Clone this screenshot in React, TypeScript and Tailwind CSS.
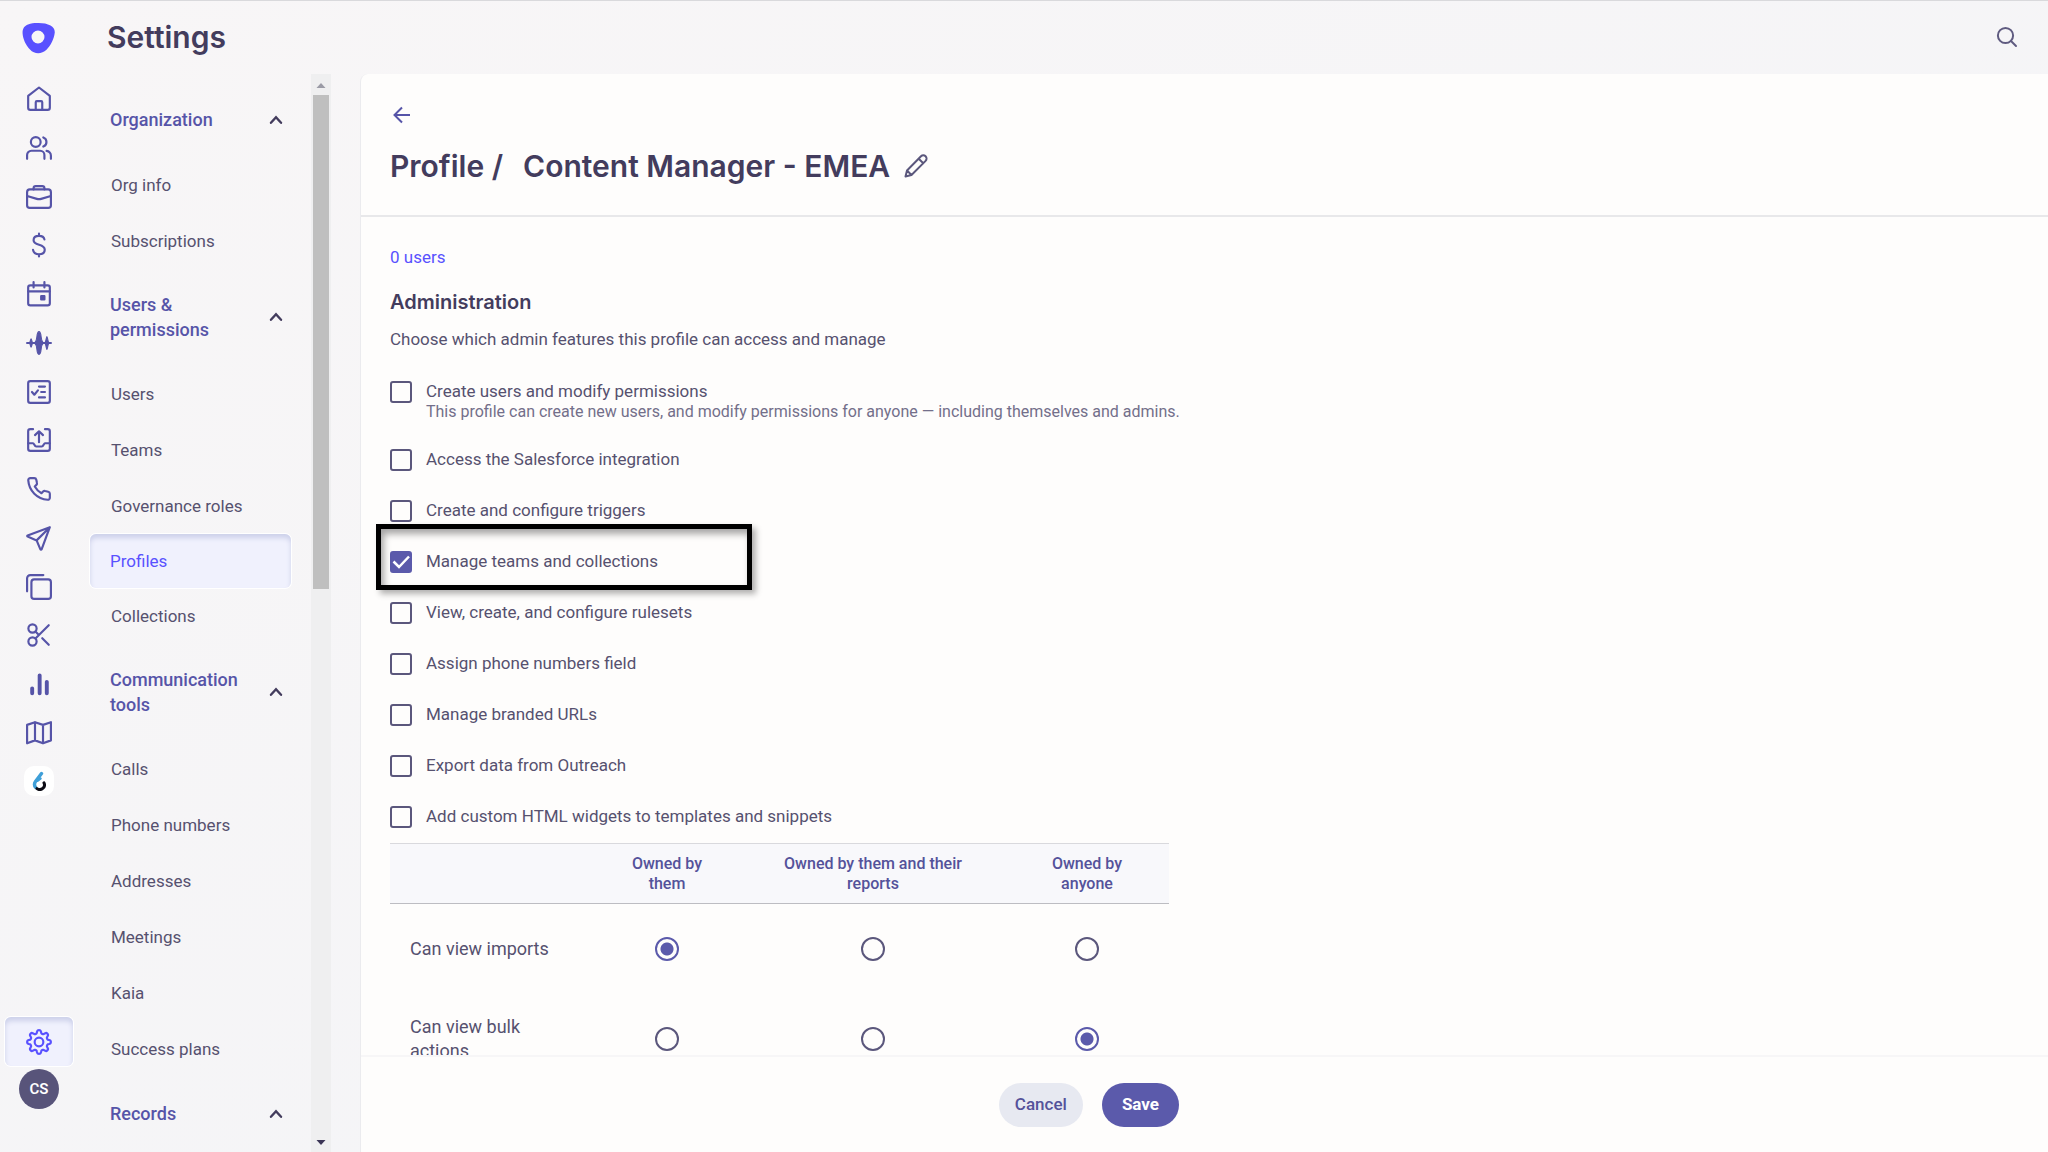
import type { ReactNode } from "react";

type NavIcon = { name: string; art: ReactNode };

const navIcons: NavIcon[] = [
  {
    name: "Home",
    art: (
      <>
        <path d="M2 9.2 12 1.4 22 9.2V20a2 2 0 0 1-2 2H4a2 2 0 0 1-2-2z" />
        <path d="M9 22v-7a1 1 0 0 1 1-1h4a1 1 0 0 1 1 1v7" />
      </>
    ),
  },
  {
    name: "Prospects",
    art: (
      <>
        <circle cx="9" cy="6.500" r="4.500" />
        <path d="M1 22v-3.500a4 4 0 0 1 4-4h8a4 4 0 0 1 4 4V22" />
        <path d="M16 2.300a4.500 4.500 0 0 1 0 8.400M19 14.700a4.500 4.500 0 0 1 4 4.500V22" />
      </>
    ),
  },
  {
    name: "Accounts",
    art: (
      <>
        <rect x="1" y="5" width="22" height="17" rx="2.500" />
        <path d="M7 5V4a2 2 0 0 1 2-2h6a2 2 0 0 1 2 2v1M1 11l9 2.700a7 7 0 0 0 4 0L23 11" />
      </>
    ),
  },
  {
    name: "Opportunities",
    art: (
      <path d="M17 6.800C16.600 4.700 14.800 3.500 12 3.500c-3 0-5 1.500-5 4 0 5.500 10.300 3 10.300 8.800 0 2.600-2.200 4.200-5.300 4.200-3 0-5.100-1.400-5.500-4M12 1.500v2M12 20.500v2" />
    ),
  },
  {
    name: "Calendar",
    art: (
      <>
        <rect x="2" y="4" width="20" height="18.500" rx="2" />
        <path d="M2 9.500h20M7 1v5M17 1v5" />
        <path d="M14 14h3v3h-3z" fill="currentColor" />
      </>
    ),
  },
  {
    name: "Kaia",
    art: (
      <>
        <path d="M1 12h22" />
        <path
          d="M12 1.500c1 0 1.700 2 2 5 .3 3.300.9 4.500 1.900 5.500-1 1-1.600 2.200-1.900 5.500-.3 3-1 5-2 5s-1.700-2-2-5c-.3-3.300-.9-4.500-1.900-5.500 1-1 1.600-2.200 1.900-5.500.3-3 1-5 2-5zM4.700 8.200c.5 0 .6 2.300 1.500 3.800-.9 1.500-1 3.800-1.500 3.800S4.100 13.500 3.200 12c.9-1.500 1-3.800 1.500-3.800zM19.300 6c.5 0 .7 4 1.800 6-1.100 2-1.300 6-1.800 6s-.7-4-1.800-6c1.100-2 1.300-6 1.800-6z"
          fill="currentColor"
          strokeWidth="1"
        />
      </>
    ),
  },
  {
    name: "Tasks",
    art: (
      <>
        <rect x="2" y="2" width="20" height="20" rx="2" />
        <path d="m5.500 12 2.200 2.500L11 10.500M12 7h5.500M14 12h3.500M12 17h5.500" />
      </>
    ),
  },
  {
    name: "Outbox",
    art: (
      <>
        <path d="M6.500 2H4a2 2 0 0 0-2 2v16a2 2 0 0 0 2 2h16a2 2 0 0 0 2-2V4a2 2 0 0 0-2-2h-2.500" />
        <path d="M12 14V4M8.300 7.500 12 4l3.700 3.500M2 15h4.500c1 0 1.300 3 3 3h5c1.700 0 2-3 3-3H22" />
      </>
    ),
  },
  {
    name: "Calls",
    art: (
      <path d="M7.600 2H4C2.900 2 2 2.900 2.100 4c.7 9.700 8.200 17.200 17.900 17.900 1.100.1 2-.8 2-1.900v-3.600c0-.9-.6-1.700-1.500-1.900l-2.800-.6c-.7-.2-1.400 0-1.900.5l-1.500 1.500A16 16 0 0 1 8.100 9.700l1.500-1.500c.5-.5.7-1.200.5-1.900l-.6-2.800C9.300 2.600 8.500 2 7.600 2z" />
    ),
  },
  {
    name: "Sequences",
    art: (
      <path d="M22 2 1.500 9.600c-.5.200-.5.900 0 1.100l8.300 3.500 3.500 8.300c.2.500.9.500 1.100 0zM22 2 9.800 14.200" />
    ),
  },
  {
    name: "Templates",
    art: (
      <>
        <rect x="5" y="5" width="18" height="18" rx="2.500" />
        <path d="M1 16V4a3 3 0 0 1 3-3h12" />
      </>
    ),
  },
  {
    name: "Snippets",
    art: (
      <>
        <circle cx="6" cy="6" r="3.800" />
        <circle cx="6" cy="18" r="3.800" />
        <path d="M21 3 8.700 15.300M8.700 8.700l3 3M15 15l6 6" />
      </>
    ),
  },
  {
    name: "Reports",
    art: <path d="M5.700 16v4.500M12.600 4v16.500M19.200 10v10.500" strokeWidth="3.600" />,
  },
  {
    name: "Success plans",
    art: (
      <path d="M1 4.500v17l7.300-2.700 7.400 2.700 7.300-2.700V2l-7.300 2.500L8.300 2zM8.300 2v16.800M15.700 4.500v17" />
    ),
  },
];

// Eight rounded teeth around the 24px box
const gearPoints = Array.from({ length: 96 }, (_, i) => {
  const angle = (i / 96) * Math.PI * 2;
  const radius = 9.5 + 1.5 * Math.tanh(1.8 * Math.cos(8 * angle));
  return `${12 + radius * Math.cos(angle)},${12 + radius * Math.sin(angle)}`;
}).join(" ");

type Entry = { label: string; href: string };

const sections: { title: string; items: Entry[] }[] = [
  {
    title: "Organization",
    items: [
      { label: "Org info", href: "#org-info" },
      { label: "Subscriptions", href: "#subscriptions" },
    ],
  },
  {
    title: "Users & permissions",
    items: [
      { label: "Users", href: "#users" },
      { label: "Teams", href: "#teams" },
      { label: "Governance roles", href: "#governance-roles" },
      { label: "Profiles", href: "#profiles" },
      { label: "Collections", href: "#collections" },
    ],
  },
  {
    title: "Communication tools",
    items: [
      { label: "Calls", href: "#calls" },
      { label: "Phone numbers", href: "#phone-numbers" },
      { label: "Addresses", href: "#addresses" },
      { label: "Meetings", href: "#meetings" },
      { label: "Kaia", href: "#kaia" },
      { label: "Success plans", href: "#success-plans" },
    ],
  },
  { title: "Records", items: [] },
];

const permissions = [
  {
    label: "Create users and modify permissions",
    hint: "This profile can create new users, and modify permissions for anyone — including themselves and admins.",
  },
  { label: "Access the Salesforce integration" },
  { label: "Create and configure triggers" },
  { label: "Manage teams and collections", checked: true },
  { label: "View, create, and configure rulesets" },
  { label: "Assign phone numbers field" },
  { label: "Manage branded URLs" },
  { label: "Export data from Outreach" },
  { label: "Add custom HTML widgets to templates and snippets" },
];

const scopes = ["Owned by them", "Owned by them and their reports", "Owned by anyone"];

const access = [
  { label: "Can view imports", name: "imports", selected: 0 },
  { label: "Can view bulk actions", name: "bulk-actions", selected: 2 },
];

function Glyph({ children, className = "size-[26px]" }: { children: ReactNode; className?: string }) {
  return (
    <svg
      viewBox="0 0 24 24"
      className={className}
      fill="none"
      stroke="currentColor"
      strokeWidth="2"
      strokeLinecap="round"
      strokeLinejoin="round"
      aria-hidden="true"
    >
      {children}
    </svg>
  );
}

function Rail() {
  return (
    <nav aria-label="Main" className="w-[78px] shrink-0 flex flex-col items-center pb-[43px] text-[#5654a8]">
      <a href="#home" aria-label="Outreach" className="mt-[21px]">
        <svg viewBox="0 0 34 32" className="w-[34px] h-8" aria-hidden="true">
          <path
            fill="#5951ff"
            fillRule="evenodd"
            d="M15 1c5.500-.2 10 .6 13.500 2.500 3 1.700 4.600 4 4.200 7.500-.7 6-4 12.500-8.200 16.800-5 4.700-12 4.700-16.500-.3C3.500 23 .9 16.500.600 11.500.3 6.500 2.500 3.800 6 2.500 9 1.400 12 1.100 15 1zM16 8.500a6.500 6.500 0 1 0 0 13 6.500 6.500 0 0 0 0-13z"
          />
        </svg>
      </a>

      <ul className="mt-8 h-[660px] shrink-0 flex flex-col justify-between">
        {navIcons.map((icon) => (
          <li key={icon.name}>
            <a href="#nav" aria-label={icon.name} className="block">
              <Glyph>{icon.art}</Glyph>
            </a>
          </li>
        ))}
      </ul>
      <a
        href="#sixsense"
        aria-label="6sense"
        className="mt-5 size-[30px] rounded-[10px] bg-white flex items-center justify-center"
      >
        <svg viewBox="0 0 14 20" className="w-3.5 h-5" fill="none" strokeLinecap="round" aria-hidden="true">
          <path d="M9.500 2.500 3.500 10.500a5 5 0 0 0 .2 6" stroke="#3f9fd8" strokeWidth="3.400" />
          <path d="M5.500 9.800 8.500 7.500" stroke="#3f9fd8" strokeWidth="2.500" />
          <path d="M5 17.600a4.700 4.700 0 0 0 7-5.800" stroke="#0b0b14" strokeWidth="3" />
        </svg>
      </a>

      <button
        type="button"
        aria-label="Settings"
        className="mt-auto w-[68px] h-[49px] rounded-md bg-[#f0f1fd] text-[#5951ff] flex items-center justify-center shadow-[0_0_0_1px_white,inset_0_4px_5px_#cdd1ea]"
      >
        <Glyph>
          <circle cx="12" cy="12" r="4" />
          <polygon points={gearPoints} />
        </Glyph>
      </button>
      <button
        type="button"
        aria-label="Account"
        className="mt-[3px] size-10 shrink-0 rounded-full bg-[#58547a] text-white text-[15px] font-semibold"
      >
        CS
      </button>
    </nav>
  );
}

function Sidebar() {
  return (
    <div className="w-[282px] shrink-0 flex min-h-0">
      <nav aria-label="Settings" className="flex-1 min-w-0 overflow-hidden pl-3 pr-5 pt-[9px] text-[17px]">
        {sections.map((section) => (
          <div key={section.title}>
            <button
              type="button"
              className="w-full min-h-[74px] pt-[23px] pb-6 pl-5 pr-1 flex items-center justify-between text-left text-lg leading-[25px] font-medium text-[#5654a8] cursor-pointer"
            >
              <span className="w-[130px]">{section.title}</span>
              <svg viewBox="0 0 24 24" className="size-[22px] text-[#433c5d]" fill="none" stroke="currentColor" strokeWidth="2.600" aria-hidden="true">
                <path d="m6.500 15 5.500-6 5.500 6" strokeLinecap="round" />
              </svg>
            </button>
            <ul>
              {section.items.map((item) => (
                <li key={item.label}>
                  {item.label === "Profiles" ? (
                    <a
                      href={item.href}
                      aria-current="page"
                      className="h-[54px] pt-0.5 pl-5 flex items-center rounded-md bg-[#f0f1fd] text-[#5951ff] shadow-[0_0_0_1px_white,inset_0_4px_5px_#cdd1ea]"
                    >
                      {item.label}
                    </a>
                  ) : (
                    <a href={item.href} className="h-14 pt-0.5 pl-[21px] flex items-center text-[#56516f]">
                      {item.label}
                    </a>
                  )}
                </li>
              ))}
            </ul>
          </div>
        ))}
      </nav>

      {/* Scrollbar */}
      <div className="w-5 mr-[29px] shrink-0 flex flex-col items-center bg-[#efeff0]">
        <svg viewBox="0 0 20 21" className="w-5 h-[21px]" aria-hidden="true">
          <path d="M5.500 14h9L10 9z" fill="#9b9ba6" />
        </svg>
        <div className="w-4 h-[494px] bg-[#bfbfbf]" />
        <svg viewBox="0 0 20 21" className="mt-auto w-5 h-[21px]" aria-hidden="true">
          <path d="M5.500 9h9L10 14z" fill="#3b3556" />
        </svg>
      </div>
    </div>
  );
}

function Permission({ label, hint, checked }: { label: string; hint?: string; checked?: boolean }) {
  return (
    <li className={hint ? "h-[68px]" : "h-[51px] last:h-[38px]"}>
      <label className="relative flex items-start gap-3.5">
        <span className="relative mt-px size-[22px] shrink-0">
          <input
            type="checkbox"
            defaultChecked={checked}
            className="peer block size-[22px] appearance-none rounded-[3px] border-2 border-[#5b577c] checked:border-[#5b5aab] checked:bg-[#5b5aab]"
          />
          <svg
            viewBox="0 0 22 22"
            className="absolute inset-0 hidden size-[22px] peer-checked:block"
            fill="none"
            stroke="white"
            strokeWidth="2.500"
            aria-hidden="true"
          >
            <path d="m3.500 10.500 5.500 5.500L19 5.500" />
          </svg>
        </span>
        <span className="flex flex-col">
          <span className="text-[17px] leading-[22px] text-[#56516f]">{label}</span>
          {hint && <span className="text-base leading-5 text-[#736f8a]">{hint}</span>}
        </span>
        {checked && (
          <span className="pointer-events-none absolute -left-3.5 -top-[26px] h-[66px] w-[376px] border-[5px] border-black shadow-[4px_4px_6px_rgba(0,0,0,0.3),inset_3px_5px_7px_rgba(0,0,0,0.35)]" />
        )}
      </label>
    </li>
  );
}

function AccessTable() {
  return (
    <table className="w-[779px] table-fixed border-collapse">
      <colgroup>
        <col className="w-[203px]" />
        <col className="w-[148px]" />
        <col className="w-[264px]" />
        <col className="w-[164px]" />
      </colgroup>
      <thead>
        <tr className="h-[60px] border-t border-b border-t-[#d9d9dd] border-b-[#bdbdc2] bg-[#f8f8fb]">
          <td />
          {scopes.map((scope) => (
            <th key={scope} scope="col" className="px-5 text-base leading-5 font-medium text-[#54529a]">
              {scope}
            </th>
          ))}
        </tr>
      </thead>
      <tbody>
        {access.map((row) => (
          <tr key={row.name} className="h-[90px]">
            <th scope="row" className="px-5 text-left text-lg leading-6 font-normal text-[#56516f]">
              {row.label}
            </th>
            {scopes.map((scope, i) => (
              <td key={scope}>
                <input
                  type="radio"
                  name={row.name}
                  aria-label={`${row.label}: ${scope}`}
                  defaultChecked={row.selected === i}
                  className="mx-auto block size-6 appearance-none rounded-full border-2 border-[#5b577c] checked:border-[#5b5aab] checked:bg-[radial-gradient(circle,#5b5aab_6px,transparent_7px)]"
                />
              </td>
            ))}
          </tr>
        ))}
      </tbody>
    </table>
  );
}

export default function App() {
  return (
    <div className="h-screen flex overflow-hidden border-t border-[#d9d9dc] bg-linear-to-br from-[#f8f6f7] to-[#f3f4f7] font-[Roboto,'Liberation_Sans',sans-serif] text-[#56516f]">
      <Rail />

      <div className="flex-1 min-w-0 flex flex-col">
        {/* Header */}
        <header className="h-[73px] shrink-0 flex items-center justify-between pl-[29px] pr-[30px] pb-0.5">
          <h1 className="font-[Inter,sans-serif] text-3xl font-semibold text-[#433c5d]">Settings</h1>
          <button type="button" aria-label="Search" className="text-[#5f5b80]">
            <svg viewBox="0 0 22 22" className="size-[22px]" fill="none" stroke="currentColor" strokeWidth="2" aria-hidden="true">
              <circle cx="9.500" cy="9.500" r="7.600" />
              <path d="m15 15 5 5" strokeLinecap="round" />
            </svg>
          </button>
        </header>

        <div className="flex-1 min-h-0 flex">
          <Sidebar />

          <main className="flex-1 min-w-0 flex flex-col rounded-tl-lg border-l border-[#ebebee] bg-[#fefdfc]">
            {/* Profile name */}
            <div className="h-[143px] shrink-0 pl-[29px] pt-[29px] border-b-2 border-[#e8e8ea]">
              <a href="#profiles" aria-label="Back" className="block w-6 text-[#5654a8]">
                <svg viewBox="0 0 24 24" className="size-6" fill="none" stroke="currentColor" strokeWidth="2" aria-hidden="true">
                  <path d="M20 12H5M12 4.500 4.500 12l7.500 7.500" />
                </svg>
              </a>
              <div className="mt-[21px] flex items-center">
                <h2 className="font-[Inter,sans-serif] text-3xl leading-9 font-semibold text-[#433c5d]">
                  <span className="mr-5">Profile /</span>
                  Content Manager - EMEA
                </h2>
                <button type="button" aria-label="Edit name" className="ml-3.5 text-[#5b577c]">
                  <Glyph className="size-6">
                    <path d="M1.500 22.500 3 16.500 17 2.300a3.200 3.200 0 0 1 4.600 4.600L7.500 21zM14.700 4.700l4.600 4.600M3 16.500 7.500 21" />
                  </Glyph>
                </button>
              </div>
            </div>

            {/* Permissions */}
            <div className="flex-1 min-h-0 overflow-hidden pl-[29px] pt-7">
              <a href="#users" className="block w-fit text-[17px] leading-6 text-[#5951ff]">
                0 users
              </a>
              <h3 className="mt-[21px] font-[Inter,sans-serif] text-xl leading-6 font-semibold text-[#433c5d]">
                Administration
              </h3>
              <p className="mt-[13px] text-[17px] leading-6">
                Choose which admin features this profile can access and manage
              </p>
              <ul className="mt-[29px]">
                {permissions.map((permission) => (
                  <Permission key={permission.label} {...permission} />
                ))}
              </ul>
              <AccessTable />
            </div>

            {/* Actions */}
            <footer className="h-[97px] shrink-0 border-t-2 border-[#f7f6f7] flex">
              <div className="w-[818px] flex items-center justify-end gap-[19px] text-[17px] font-medium">
                <button type="button" className="h-11 px-4 rounded-full bg-[#e7e9f1] text-[#54529a] cursor-pointer">
                  Cancel
                </button>
                <button type="button" className="h-11 px-5 rounded-full bg-[#5b5aab] font-bold text-white cursor-pointer">
                  Save
                </button>
              </div>
            </footer>
          </main>
        </div>
      </div>
    </div>
  );
}
